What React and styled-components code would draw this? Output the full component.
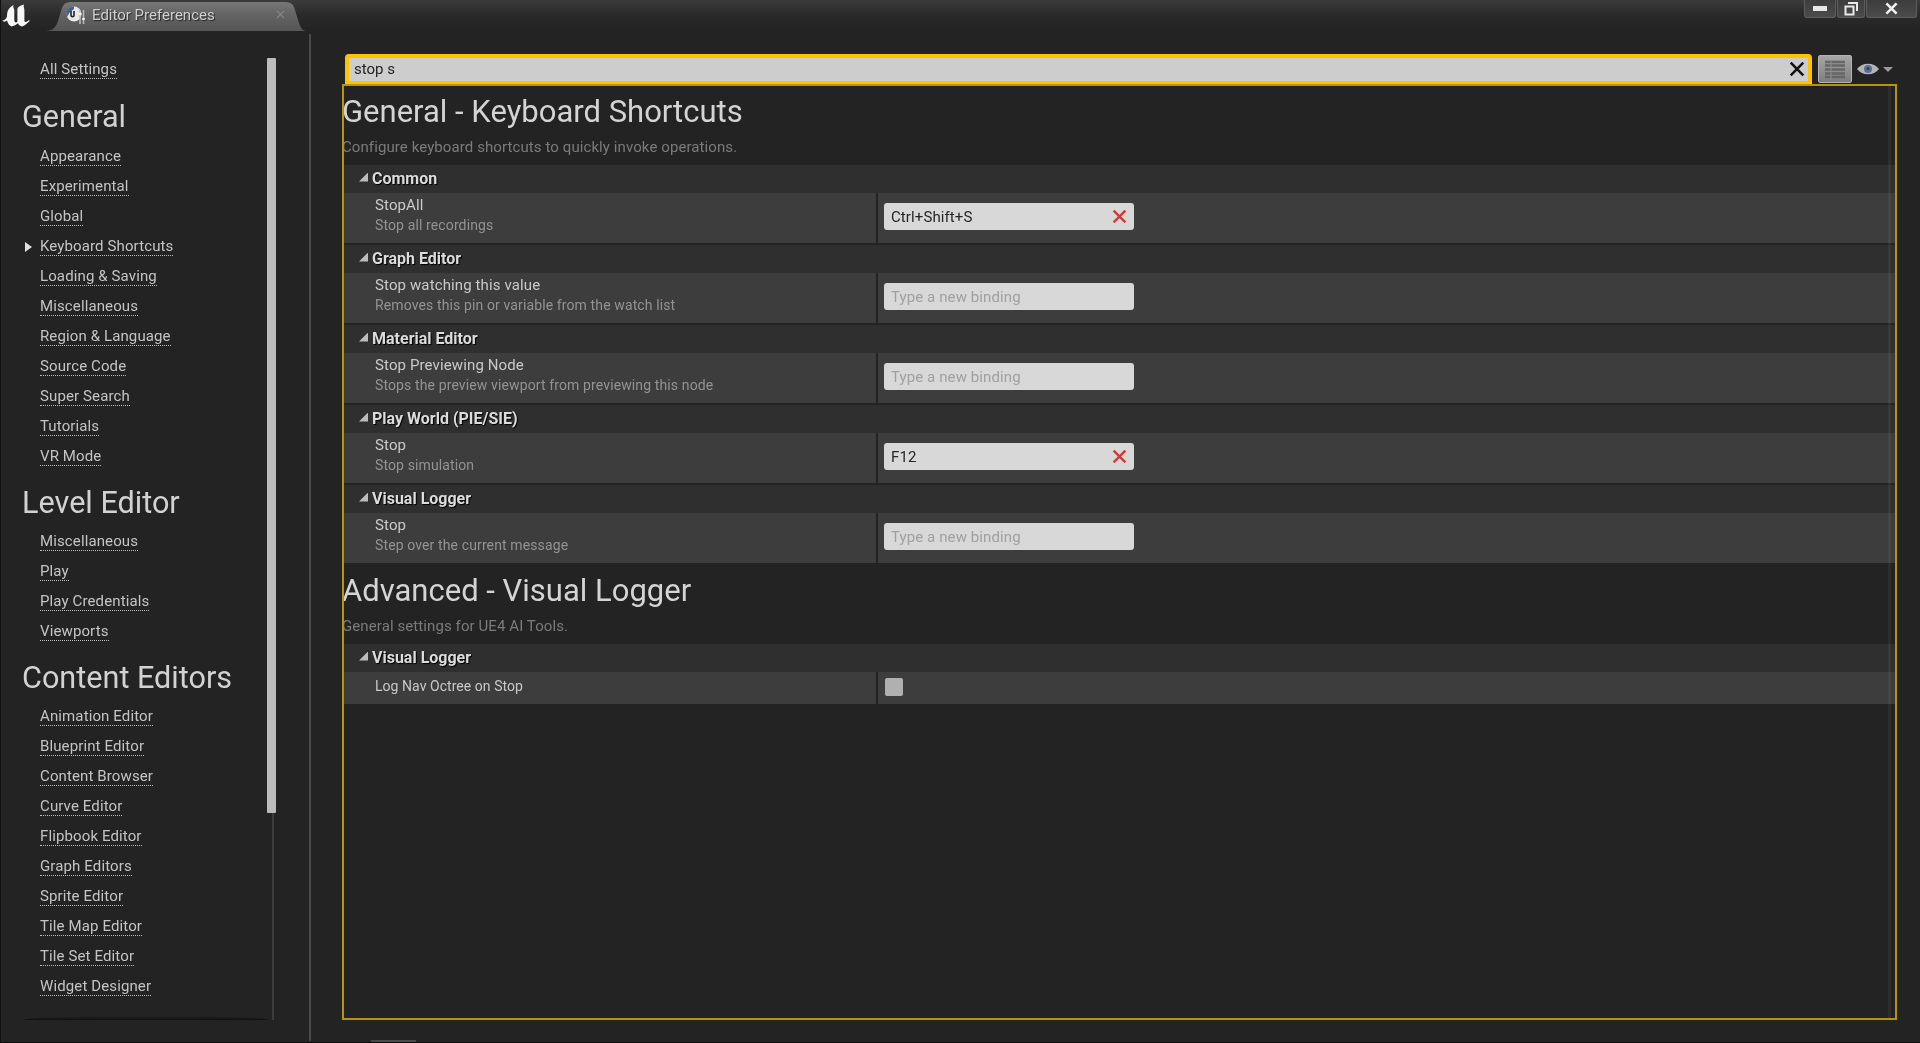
import React from "react";
import styled, { createGlobalStyle } from "styled-components";

const GlobalStyle = createGlobalStyle`
  html, body { margin: 0; padding: 0; background: #232323; }
  body { font-family: Roboto, "Liberation Sans", sans-serif; overflow: hidden; }
  * { box-sizing: border-box; }
`;

const Page = styled.div`
  width: 1920px;
  height: 1043px;
  display: flex;
  flex-direction: column;
  background: #232323;
  border-left: 1px solid #111;
  border-bottom: 1px solid #0c0c0c;
  overflow: hidden;
  position: relative;
  filter: blur(0.4px);
`;

const TitleBar = styled.div`
  height: 32px;
  flex: none;
  display: flex;
  align-items: flex-start;
  padding-left: 1px;
  background: linear-gradient(#3b3b3b 0, #2a2a2a 45%, #232323 100%);
`;

const Logo = styled.svg`
  width: 30px;
  height: 24px;
  margin-top: 4px;
  flex: none;
`;

const Tab = styled.div`
  width: 262px;
  height: 30px;
  margin: 1px 0 0 13px;
  padding: 0 22px 3px 21px;
  display: flex;
  align-items: center;
  gap: 7px;
  background: linear-gradient(#797979 0, #646464 45%, #555 100%);
  clip-path: path("M0 30 C8 30 11 26 13 20 L17 7 Q19 1 25 1 L240 1 Q247 1 249 6 L254 22 C256 28 258 30 262 30 Z");
`;

const TabTitle = styled.span`
  flex: 1;
  font-size: 15px;
  color: #d0d0d0;
  text-shadow: 1px 1px 1px #222;
`;

const WindowButtons = styled.div`
  margin-left: auto;
  margin-right: 3px;
  display: flex;
  gap: 1px;
`;

const WinButton = styled.div`
  width: ${(p) => p.$w}px;
  height: 18px;
  display: flex;
  align-items: center;
  justify-content: center;
  background: linear-gradient(#3d3d3d, #4b4b4b);
  border: 1px solid #5e5e5e;
  border-top: none;
  border-radius: 0 0 3px 3px;
`;

const Body = styled.div`
  flex: 1;
  display: flex;
  min-height: 0;
`;

const Sidebar = styled.aside`
  width: 310px;
  flex: none;
  display: flex;
  padding: 21px 0 0 22px;
  height: 1007px;
  border-right: 2px solid #4a4a4a;
  margin-top: 2px;
`;

const SideColumn = styled.div`
  width: 243px;
  height: 965px;
  display: flex;
  flex-direction: column;
  position: relative;
`;

const SideHeading = styled.h2`
  margin: 0 0 0 -1px;
  height: ${(p) => (p.$first ? 57 : 55)}px;
  padding-top: ${(p) => (p.$first ? 15 : 14)}px;
  font-size: 30.6px;
  line-height: 34px;
  font-weight: 400;
  color: #d2d2d2;
`;

const SideItem = styled.div`
  height: 30px;
  padding-left: 17px;
  display: flex;
  align-items: center;
  position: relative;
`;

const SideLink = styled.span`
  font-size: 15px;
  line-height: 17px;
  letter-spacing: 0.12px;
  color: #c4c4c4;
  border-bottom: 1px dotted #bdbdbd;
`;

const ActiveArrow = styled.i`
  position: absolute;
  left: 2px;
  top: 10px;
  width: 0;
  height: 0;
  border-left: 7px solid #e0e0e0;
  border-top: 5px solid transparent;
  border-bottom: 5px solid transparent;
`;

const SideShadow = styled.div`
  position: absolute;
  left: 0;
  right: -3px;
  bottom: 0;
  height: 4px;
  background: linear-gradient(rgba(10, 10, 10, 0), #111);
  border-radius: 50% 50% 0 0 / 100% 100% 0 0;
`;

const SideTrack = styled.div`
  width: 9px;
  margin: 3px 0 0 1px;
  height: 962px;
  position: relative;
  &::before {
    content: "";
    position: absolute;
    left: 5px;
    top: 0;
    bottom: 0;
    width: 2px;
    background: #3c3c3c;
  }
`;

const SideThumb = styled.div`
  position: relative;
  width: 9px;
  height: 755px;
  background: #bcbcbc;
  border-radius: 1px;
`;

const Main = styled.main`
  flex: 1;
  min-width: 0;
  padding: 22px 23px 0 31px;
  display: flex;
  flex-direction: column;
`;

const SearchRow = styled.div`
  display: flex;
  align-items: flex-start;
  height: 30px;
`;

const SearchBox = styled.div`
  width: 1467px;
  margin-left: 3px;
  height: 30px;
  padding: 0 3px 2px 5px;
  display: flex;
  align-items: center;
  justify-content: space-between;
  background: #cdcdcd;
  border: 4px solid #ffc400;
  border-bottom-width: 3px;
  border-radius: 4px 4px 0 0;
  font-size: 15px;
  color: #222;
`;

const ListButton = styled.div`
  width: 34px;
  height: 28px;
  margin: 1px 0 0 6px;
  display: flex;
  align-items: center;
  justify-content: center;
  background: linear-gradient(#a6a6a6, #7e7e7e);
  border: 1px solid #b4b4b4;
  border-radius: 2px;
`;

const ViewOptions = styled.div`
  display: flex;
  align-items: center;
  gap: 4px;
  margin: 8px 0 0 5px;
`;

const Caret = styled.i`
  width: 0;
  height: 0;
  border-top: 5px solid #9a9a9a;
  border-left: 5px solid transparent;
  border-right: 5px solid transparent;
`;

const Frame = styled.div`
  position: relative;
  height: 936px;
  &::after {
    content: "";
    position: absolute;
    inset: 0;
    border: 2px solid #b8940c;
    pointer-events: none;
  }
`;

const FrameTrack = styled.div`
  position: absolute;
  right: 6px;
  top: 2px;
  bottom: 2px;
  width: 3px;
  background: rgba(255, 255, 255, 0.05);
`;

const SectionTitle = styled.h1`
  margin: 0;
  height: 48px;
  padding-top: 9px;
  font-size: 31px;
  line-height: 38px;
  font-weight: 400;
  color: #d4d4d4;
`;

const SectionNote = styled.p`
  margin: 0;
  height: 33px;
  padding-top: 6px;
  font-size: 15px;
  line-height: 18px;
  letter-spacing: 0.09px;
  color: #7b7b7b;
`;

const Category = styled.div`
  height: 28px;
  padding: 0 0 2px 17px;
  display: flex;
  align-items: center;
  gap: 4px;
  background: #2f2f2f;
  font-size: 16px;
  font-weight: 700;
  color: #dcdcdc;
  text-shadow: 1px 1px 1px #000;
`;

const CornerArrow = styled.i`
  width: 9px;
  height: 9px;
  margin-top: -2px;
  background: #bdbdbd;
  clip-path: polygon(100% 0, 100% 100%, 0 100%);
`;

const Row = styled.div`
  display: flex;
  height: ${(p) => (p.$compact ? 32 : 50)}px;
  background: #3d3d3d;
  margin-bottom: ${(p) => (p.$last ? 0 : 2)}px;
`;

const NameCell = styled.div`
  width: 536px;
  flex: none;
  padding: 0 0 ${(p) => (p.$compact ? 3 : 6)}px 33px;
  display: flex;
  flex-direction: column;
  justify-content: center;
  border-right: 2px solid #232323;
`;

const Name = styled.div`
  font-size: ${(p) => (p.$small ? 14 : 15)}px;
  line-height: 19px;
  letter-spacing: ${(p) => (p.$small ? 0.05 : 0.12)}px;
  color: #c9c9c9;
`;

const Desc = styled.div`
  font-size: 14px;
  line-height: 17px;
  letter-spacing: 0.12px;
  margin-top: 2px;
  color: #939393;
`;

const ValueCell = styled.div`
  flex: 1;
  padding: 0 0 3px 6px;
  display: flex;
  align-items: center;
`;

const Binding = styled.div`
  width: 250px;
  height: 27px;
  padding: 0 7px;
  display: flex;
  align-items: center;
  justify-content: space-between;
  background: #d8d8d8;
  border-radius: 3px;
  font-size: 15px;
  letter-spacing: 0.1px;
  color: ${(p) => (p.$empty ? "#a0a0a0" : "#262626")};
`;

const Check = styled.div`
  width: 18px;
  height: 18px;
  margin-left: 1px;
  background: #b0b0b0;
  border-radius: 2px;
`;

const BottomTab = styled.div`
  position: absolute;
  left: 370px;
  bottom: 0;
  width: 45px;
  height: 2px;
  background: #4a4a4a;
`;

const sideGroups = [
  {
    title: "General",
    first: true,
    items: [
      "Appearance",
      "Experimental",
      "Global",
      "Keyboard Shortcuts",
      "Loading & Saving",
      "Miscellaneous",
      "Region & Language",
      "Source Code",
      "Super Search",
      "Tutorials",
      "VR Mode",
    ],
  },
  { title: "Level Editor", items: ["Miscellaneous", "Play", "Play Credentials", "Viewports"] },
  {
    title: "Content Editors",
    items: [
      "Animation Editor",
      "Blueprint Editor",
      "Content Browser",
      "Curve Editor",
      "Flipbook Editor",
      "Graph Editors",
      "Sprite Editor",
      "Tile Map Editor",
      "Tile Set Editor",
      "Widget Designer",
    ],
  },
];

const shortcuts = [
  { cat: "Common", name: "StopAll", desc: "Stop all recordings", bind: "Ctrl+Shift+S" },
  { cat: "Graph Editor", name: "Stop watching this value", desc: "Removes this pin or variable from the watch list" },
  { cat: "Material Editor", name: "Stop Previewing Node", desc: "Stops the preview viewport from previewing this node" },
  { cat: "Play World (PIE/SIE)", name: "Stop", desc: "Stop simulation", bind: "F12" },
  { cat: "Visual Logger", name: "Stop", desc: "Step over the current message" },
];

const CloseX = ({ size, color, width = 2 }) => (
  <svg width={size} height={size} viewBox="0 0 14 14">
    <path d="M1.5 1.5 12.5 12.5M12.5 1.5 1.5 12.5" stroke={color} strokeWidth={width} fill="none" />
  </svg>
);

const UnrealLogo = () => (
  <Logo viewBox="0 0 30 24">
    <path
      fill="#f6f6f6"
      d="M0 16.500C2.500 16.500 4.800 14.500 5 12C5.200 8 5.500 4.500 11.500 1C10.800 3 11.800 4 12.300 6V16.500C12.500 18.500 14 19 15.400 17.800V5.500C15.500 3.500 17.500 1.500 22 0.500C21.200 2.500 22.200 4 22.400 6V16.800C22.800 18.800 24 18.500 27 16L27.700 17C25 19.500 22.500 21.800 20 22.500C18 22 16.500 21 16 19.300C13.500 21 11.500 22.200 9.500 22.500C7 21.500 5.800 19.500 5 16.500C3.500 18 1.500 18 0 16.500Z"
    />
  </Logo>
);

const TabIcon = () => (
  <svg width="19" height="20" viewBox="0 0 19 20">
    <circle cx="8" cy="9" r="7.500" fill="#e8e8e8" />
    <path d="M8 1.500A7.500 7.500 0 0 0 1 12L4 7 8 4Z" fill="#3f5f96" />
    <path d="M5 6V10.500C5 12 8 12 8 10.500V6" stroke="#222" strokeWidth="1.600" fill="none" />
    <path d="M14 5V19M17.500 5V19" stroke="#bcbcbc" strokeWidth="1.500" />
    <path d="M12.800 9H15.500M16.200 14H18.800" stroke="#f4f4f4" strokeWidth="2" />
  </svg>
);

const App = () => (
  <Page>
    <GlobalStyle />
    <TitleBar>
      <UnrealLogo />
      <Tab>
        <TabIcon />
        <TabTitle>Editor Preferences</TabTitle>
        <CloseX size={9} color="#8a8a8a" width={1.800} />
      </Tab>
      <WindowButtons>
        <WinButton $w={32}>
          <svg width="14" height="5"><rect width="14" height="5" fill="#e8e8e8" /></svg>
        </WinButton>
        <WinButton $w={28}>
          <svg width="14" height="14" viewBox="0 0 14 14">
            <path d="M4 1H13V9M1.500 4.500H9.500V12.500H1.500Z" stroke="#e8e8e8" strokeWidth="2" fill="none" />
          </svg>
        </WinButton>
        <WinButton $w={51}>
          <CloseX size={13} color="#efefef" width={2.800} />
        </WinButton>
      </WindowButtons>
    </TitleBar>
    <Body>
      <Sidebar>
        <SideColumn>
          <SideItem>
            <SideLink>All Settings</SideLink>
          </SideItem>
          {sideGroups.map((g) => (
            <React.Fragment key={g.title}>
              <SideHeading $first={g.first}>{g.title}</SideHeading>
              {g.items.map((it) => (
                <SideItem key={it}>
                  {it === "Keyboard Shortcuts" && <ActiveArrow />}
                  <SideLink>{it}</SideLink>
                </SideItem>
              ))}
            </React.Fragment>
          ))}
          <SideShadow />
        </SideColumn>
        <SideTrack>
          <SideThumb />
        </SideTrack>
      </Sidebar>
      <Main>
        <SearchRow>
          <SearchBox>
            <span>stop s</span>
            <CloseX size={16} color="#111" width={2.200} />
          </SearchBox>
          <ListButton>
            <svg width="20" height="19" viewBox="0 0 20 19">
              <path
                d="M0 2H20M0 5.500H20M0 9.500H20M0 13.500H20M0 17H20"
                stroke="#666"
                strokeWidth="2.400"
              />
              <path d="M6 0V19" stroke="#8f8f8f" strokeWidth="1" />
            </svg>
          </ListButton>
          <ViewOptions>
            <svg width="22" height="14" viewBox="0 0 22 14">
              <path d="M0 7C5 0 17 0 22 7C17 14 5 14 0 7Z" fill="#b4b4b4" />
              <circle cx="11" cy="7" r="4" fill="#5a7094" />
              <circle cx="11" cy="6.500" r="1.500" fill="#2f3f5c" />
            </svg>
            <Caret />
          </ViewOptions>
        </SearchRow>
        <Frame>
          <FrameTrack />
          <SectionTitle>General - Keyboard Shortcuts</SectionTitle>
          <SectionNote>Configure keyboard shortcuts to quickly invoke operations.</SectionNote>
          {shortcuts.map((s, i) => (
            <React.Fragment key={s.cat}>
              <Category>
                <CornerArrow />
                {s.cat}
              </Category>
              <Row $last={i === shortcuts.length - 1}>
                <NameCell>
                  <Name>{s.name}</Name>
                  <Desc>{s.desc}</Desc>
                </NameCell>
                <ValueCell>
                  <Binding $empty={!s.bind}>
                    {s.bind || "Type a new binding"}
                    {s.bind && <CloseX size={15} color="#cf3a3a" width={2.200} />}
                  </Binding>
                </ValueCell>
              </Row>
            </React.Fragment>
          ))}
          <SectionTitle>Advanced - Visual Logger</SectionTitle>
          <SectionNote>General settings for UE4 AI Tools.</SectionNote>
          <Category>
            <CornerArrow />
            Visual Logger
          </Category>
          <Row $compact $last>
            <NameCell $compact>
              <Name $small>Log Nav Octree on Stop</Name>
            </NameCell>
            <ValueCell>
              <Check />
            </ValueCell>
          </Row>
        </Frame>
      </Main>
    </Body>
    <BottomTab />
  </Page>
);

export default App;
